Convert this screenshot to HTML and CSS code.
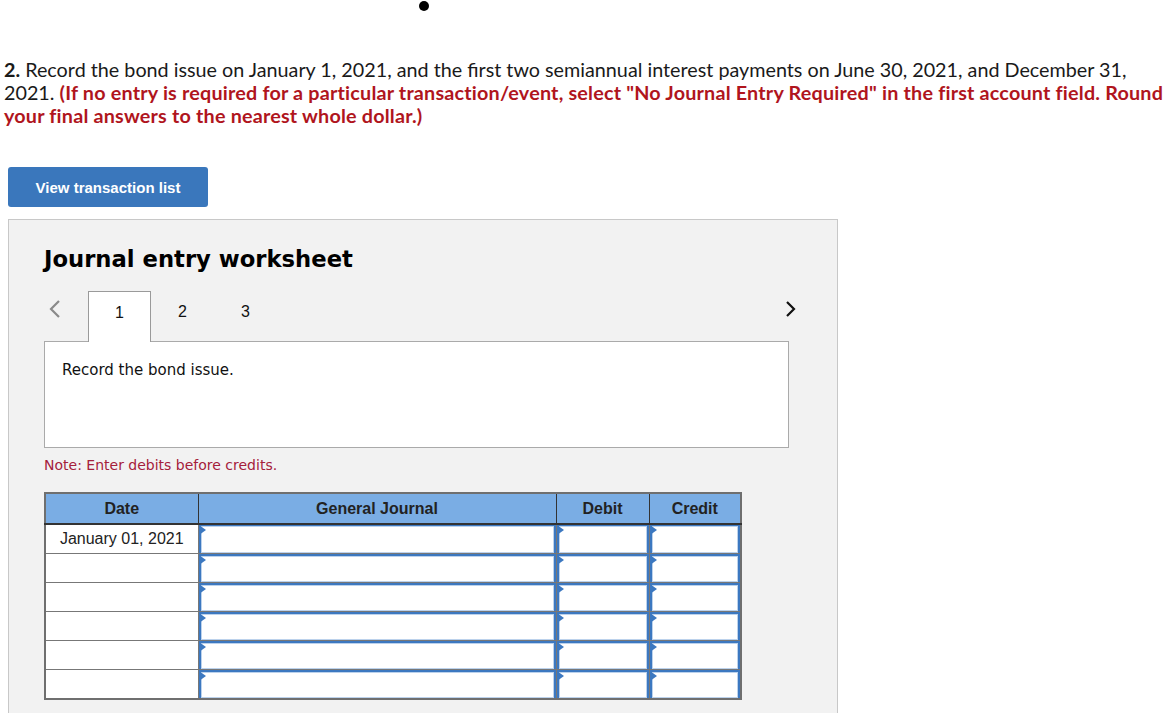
FILE: index.html
```html
<!DOCTYPE html>
<html lang="en">
<head>
  <meta charset="UTF-8">
  <title>Journal entry worksheet</title>
  <link rel="stylesheet" href="styles.css">
</head>
<body>
  <div class="dot-row"><span class="dot"></span></div>

  <p class="question"><span class="num">2.</span> Record the bond issue on January 1, 2021, and the first two semiannual interest payments on June 30, 2021, and December 31,<br>2021. <span class="warn">(If no entry is required for a particular transaction/event, select "No Journal Entry Required" in the first account field. Round<br>your final answers to the nearest whole dollar.)</span></p>

  <button class="view-btn">View transaction list</button>

  <div class="worksheet">
    <h2 class="ws-title">Journal entry worksheet</h2>

    <div class="tabs">
      <span class="chev chev-left">
        <svg width="12" height="18" viewBox="0 0 12 18"><path d="M10 1 L2 9 L10 17" fill="none" stroke="#8a8a8a" stroke-width="2.2"/></svg>
      </span>
      <span class="tab active">1</span>
      <span class="tab">2</span>
      <span class="tab">3</span>
      <span class="chev chev-right">
        <svg width="12" height="18" viewBox="0 0 12 18"><path d="M2 2 L9 9 L2 16" fill="none" stroke="#111" stroke-width="2.2"/></svg>
      </span>
    </div>

    <div class="tab-body">Record the bond issue.</div>

    <p class="note">Note: Enter debits before credits.</p>

    <table class="journal">
      <colgroup>
        <col class="c-date">
        <col class="c-acct">
        <col class="c-num">
        <col class="c-num2">
      </colgroup>
      <thead>
        <tr>
          <th>Date</th>
          <th>General Journal</th>
          <th>Debit</th>
          <th>Credit</th>
        </tr>
      </thead>
      <tbody>
        <tr>
          <td class="date">January 01, 2021</td>
          <td><div class="field"></div></td>
          <td><div class="field"></div></td>
          <td><div class="field"></div></td>
        </tr>
        <tr>
          <td class="date"></td>
          <td><div class="field"></div></td>
          <td><div class="field"></div></td>
          <td><div class="field"></div></td>
        </tr>
        <tr>
          <td class="date"></td>
          <td><div class="field"></div></td>
          <td><div class="field"></div></td>
          <td><div class="field"></div></td>
        </tr>
        <tr>
          <td class="date"></td>
          <td><div class="field"></div></td>
          <td><div class="field"></div></td>
          <td><div class="field"></div></td>
        </tr>
        <tr>
          <td class="date"></td>
          <td><div class="field"></div></td>
          <td><div class="field"></div></td>
          <td><div class="field"></div></td>
        </tr>
        <tr>
          <td class="date"></td>
          <td><div class="field"></div></td>
          <td><div class="field"></div></td>
          <td><div class="field"></div></td>
        </tr>
      </tbody>
    </table>
  </div>
</body>
</html>
```

FILE: styles.css
```css
body {
  margin: 0;
  padding: 0 0 0 4px;
  background: #fff;
  color: #1a1a1a;
  font-family: Lato, 'Open Sans', sans-serif;
  overflow: hidden;
}

.dot-row {
  height: 11px;
  padding-top: 1px;
  padding-left: 415px;
}

.dot {
  display: block;
  width: 10px;
  height: 10px;
  border-radius: 50%;
  background: #000;
}

.question {
  margin: 46px 0 0 0;
  font-size: 19.75px;
  line-height: 23px;
  white-space: nowrap;
}

.num {
  font-weight: 700;
}

.warn {
  color: #b0151d;
  font-weight: 700;
  letter-spacing: 0.2px;
}

.view-btn {
  display: block;
  margin: 40px 0 0 4px;
  width: 200px;
  height: 40px;
  border: none;
  border-radius: 3px;
  background: #3a77bc;
  color: #fff;
  font-family: 'Liberation Sans', Arial, sans-serif;
  font-size: 15px;
  font-weight: 700;
  cursor: pointer;
}

.worksheet {
  margin: 12px 0 0 4px;
  width: 830px;
  height: 520px;
  background: #f2f2f2;
  border: 1px solid #c8c8c8;
  padding: 0 0 0 35px;
  box-sizing: border-box;
}

.ws-title {
  margin: 24px 0 0 0;
  font-family: 'DejaVu Sans', Verdana, sans-serif;
  font-size: 22.7px;
  font-weight: 700;
  color: #000;
  line-height: 30px;
}

.tabs {
  display: flex;
  align-items: flex-end;
  width: 745px;
  height: 51px;
  margin-top: 16px;
}

.chev {
  align-self: flex-start;
  margin-top: 10px;
  display: flex;
}

.chev-left {
  margin-left: 5px;
  margin-right: 27px;
}

.chev-right {
  margin-left: auto;
  margin-right: -8px;
}

.tab {
  width: 63px;
  height: 50px;
  box-sizing: border-box;
  display: flex;
  align-items: center;
  justify-content: center;
  font-family: 'Liberation Sans', Arial, sans-serif;
  font-size: 16px;
  color: #111;
  padding-bottom: 9px;
}

.tab.active {
  background: #fff;
  border: 1px solid #9a9a9a;
  border-bottom: none;
  height: 51px;
  margin-bottom: -1px;
  position: relative;
  z-index: 1;
}

.tab-body {
  width: 745px;
  height: 107px;
  box-sizing: border-box;
  background: #fff;
  border: 1px solid #aaa;
  padding: 19px 0 0 17px;
  font-family: 'DejaVu Sans', Verdana, sans-serif;
  font-size: 15px;
  color: #111;
}

.note {
  margin: 8px 0 0 0;
  font-family: 'DejaVu Sans', Verdana, sans-serif;
  font-size: 14px;
  color: #a5203b;
  line-height: 18px;
}

.journal {
  margin-top: 18px;
  border-collapse: collapse;
  table-layout: fixed;
  width: 696px;
  font-family: 'Liberation Sans', Arial, sans-serif;
  font-size: 16px;
  border: 2px solid #6f6f6f;
}

.c-date { width: 153px; }
.c-acct { width: 358px; }
.c-num { width: 93px; }
.c-num2 { width: 92px; }

.journal th {
  background: #7aade4;
  color: #222;
  font-weight: 700;
  height: 29px;
  padding: 0;
  border: 1px solid #333;
  border-bottom: 2px solid #333;
}

.journal td {
  height: 28px;
  padding: 0;
  border: 1px solid #777;
  background: #fff;
}

.journal td.date {
  text-align: center;
  color: #222;
}

.field {
  position: relative;
  height: 28px;
  box-sizing: border-box;
  border-top: 2px solid #3c78c0;
  border-left: 2px solid #3c78c0;
  border-right: 2px solid #3c78c0;
  box-shadow: inset 0 0 0 1px #bcd2ec;
  background: #fff;
}

.journal tbody tr:first-child .field {
  border-top-width: 1px;
}

.field::before {
  content: "";
  position: absolute;
  top: -1px;
  left: -2px;
  border-top: 5px solid transparent;
  border-bottom: 5px solid transparent;
  border-left: 7px solid #3c78c0;
}
```
